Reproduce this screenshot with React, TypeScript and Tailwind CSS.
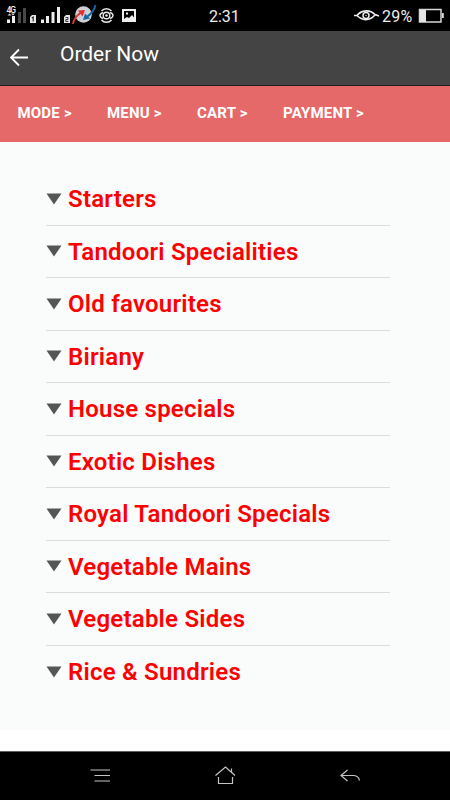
import React from "react";

const categories = [
  "Starters",
  "Tandoori Specialities",
  "Old favourites",
  "Biriany",
  "House specials",
  "Exotic Dishes",
  "Royal Tandoori Specials",
  "Vegetable Mains",
  "Vegetable Sides",
  "Rice & Sundries",
];

function StatusIcons() {
  return (
    <svg width="142" height="31" viewBox="0 0 142 31" fill="none">
      <text x="6.500" y="12.500" fill="#f0f0f0" fontSize="8.5" fontWeight="500" textLength="9.500">4G</text>
      <path d="M7.500 15.500l2-2 2 2zM11 13.500h4l-2 2z" fill="#ddd" />
      <path d="M7 19.500h3V23H7zM12 16h3v7h-3z" fill="#eee" />
      <path d="M18 12h3v11h-3zM23 8h3v15h-3z" fill="#484848" />
      <path d="M32 15h4v8h-6v-6z" fill="#e6e6e6" />
      <path d="M31.800 18l1.400-1v4.500" stroke="#222" strokeWidth="1.100" />
      <path d="M41 19.500h3V23h-3zM46 16h3v7h-3zM51.500 12h3v11h-3zM57 7h3v16h-3z" fill="#eee" />
      <path d="M66 15h4v8h-6v-6z" fill="#e6e6e6" />
      <path d="M65.500 17.500h2.500v2h-2.200v2h2.600" stroke="#222" strokeWidth="0.900" />
      <circle cx="83.500" cy="14.500" r="8.300" fill="#cdd0d4" />
      <path d="M73 24c.5-4 3-8 8-11.500" stroke="#e52d2d" strokeWidth="1.900" />
      <path d="M78 10.500l7-.5-2.500 6.500z" fill="#e52d2d" />
      <path d="M95.500 5c-1 4.500-3.500 8-8 11.500" stroke="#1765a8" strokeWidth="1.900" />
      <path d="M85 13.500l-2 6.500 7-1.500z" fill="#1765a8" />
      <g stroke="#e8e8e8" strokeWidth="1.400">
        <path d="M101.500 11c2.500-3 7.500-3 10 0M101.500 20c2.500 3 7.500 3 10 0" />
        <path d="M103 12.500c-4 1.500-4 4.500 0 6M110 12.500c4 1.500 4 4.500 0 6" />
        <circle cx="106.500" cy="15.500" r="3.300" />
      </g>
      <circle cx="106.500" cy="15.500" r="1.200" fill="#eee" />
      <path fillRule="evenodd" d="M122 9h14v13h-14zM124 11v8l3-2 2 1 3-3 2 2.500V11z" fill="#eee" />
      <path d="M126 12.500h2v2h-2z" fill="#eee" />
    </svg>
  );
}

function StatusBar() {
  return (
    <div className="flex h-[31px] items-center bg-black text-[#ededed]">
      <StatusIcons />
      <span className="ml-[67px] w-[32px] whitespace-nowrap text-base leading-[31px] pt-[2px]">2:31</span>
      <svg className="ml-[112px]" width="28" height="31" viewBox="0 0 28 31" fill="none" stroke="#eee">
        <path d="M1 15.500h3c5-6 13-6 18-1l4 1.500M4 15.500c5 5 12 6 18-.5" strokeWidth="1.700" />
        <circle cx="13" cy="15.500" r="3" strokeWidth="1.500" />
        <circle cx="13" cy="15.500" r=".7" fill="#eee" stroke="none" />
      </svg>
      <span className="ml-px w-[36px] whitespace-nowrap text-base tracking-[.2px] leading-[31px] pt-[2px]">29%</span>
      <svg width="28" height="31" viewBox="0 0 28 31">
        <path d="M1.500 9.500h21.500v12.500h-21.500z" fill="none" stroke="#d8d8d8" strokeWidth="1.500" />
        <path d="M2 10h6v12H2z" fill="#e4e4e4" />
        <path d="M24 13h1.800v5h-1.800z" fill="#d8d8d8" />
      </svg>
    </div>
  );
}

export default function App() {
  return (
    <div className="flex h-[800px] w-[450px] flex-col overflow-hidden bg-white font-[Roboto,sans-serif]">
      <StatusBar />
      <header className="flex h-[55px] border-b border-[#1d1d1d] bg-[#444444] text-white">
        <svg className="ml-[10px] mt-[17px]" width="19" height="19" viewBox="0 0 19 19" fill="none" stroke="#fff" strokeWidth="1.900">
          <path d="M18 9.500H1.500M9 1.500l-8 8 8 8" />
        </svg>
        <h1 className="ml-[31px] mt-[9px] whitespace-nowrap text-[21px] leading-7 tracking-[-0.05px]">Order Now</h1>
      </header>
      <nav className="flex h-[56px] items-center bg-[#e56969] pb-[2px] pl-[17.500px] text-[15px] font-bold tracking-[.2px] text-white">
        <span className="w-[89.500px] whitespace-nowrap">MODE &gt;</span>
        <span className="w-[90px] whitespace-nowrap">MENU &gt;</span>
        <span className="w-[86px] whitespace-nowrap">CART &gt;</span>
        <span className="whitespace-nowrap">PAYMENT &gt;</span>
      </nav>
      <main className="h-[588px] bg-[#fafcfc] pl-[46px] pr-[60px] pt-[31px]">
        {categories.map((name) => (
          <div key={name} className="flex h-[52.500px] items-center border-b border-[#dcdcdc] last:border-b-0">
            <svg className="mr-[6px]" width="16" height="12" viewBox="0 0 16 12">
              <path d="M.5.500h15L8 11.500z" fill="#555" />
            </svg>
            <span className="whitespace-nowrap pt-px text-2xl font-semibold tracking-[.23px] text-[#ff0000]">{name}</span>
          </div>
        ))}
      </main>
      <footer className="mt-[21px] flex h-[49px] border-t border-[#606060] bg-black">
        <svg width="450" height="48" viewBox="0 0 450 48" fill="none" stroke="#c4c4c4" strokeWidth="1.200">
          <path d="M90.500 18H110M94.500 23.500H110M94.500 29H110" />
          <path d="M215.500 23.500l10-8.500 9.500 8.500M231.500 20V16.500M218.500 25v6.500h14V25" />
          <path d="M347.500 18l-6.500 5.500 6.500 5.500M341 23.500h12c4 0 6 2 6.500 5" />
        </svg>
      </footer>
    </div>
  );
}
